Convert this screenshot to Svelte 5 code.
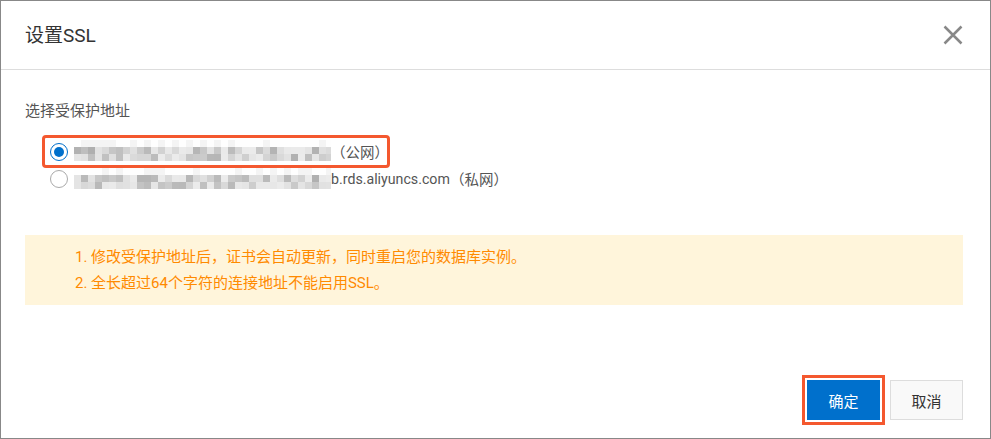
<script>
  // mosaic that stands in for the masked host names
  const shade = (row, col, seed) => {
    const n = Math.sin((col + 1) * 12.9898 + (row + 1) * 78.233 + seed) * 43758.5453;
    const f = n - Math.floor(n);
    // top row is only a faint haze, the two lower ones carry the darker blocks
    if (row === 0) return Math.round(f > 0.6 ? 244 : 254);
    return Math.round(235 - f * f * 60);
  };
  const cols = 37;
  const rows = [0, 1, 2];
  const mosaic = (seed) =>
    rows.map((r) =>
      Array.from({ length: cols }, (_, c) => {
        const v = shade(r, c, seed);
        return `rgb(${v},${v},${v})`;
      })
    );
  const publicCells = mosaic(3);
  const privateCells = mosaic(7);
</script>

<div class="dialog">
  <header class="head">
    <h2>设置SSL</h2>
    <button class="close" aria-label="关闭">
      <svg width="20" height="20" viewBox="0 0 20 20">
        <path d="M1.5 1.5 L18.5 18.5 M18.5 1.5 L1.5 18.5" stroke="#888" stroke-width="2.5" fill="none" />
      </svg>
    </button>
  </header>

  <div class="body">
    <div class="label">选择受保护地址</div>
    <div class="options">
      <div class="option marked">
        <span class="radio checked"></span>
        <span class="mask">
          {#each publicCells as row}
            {#each row as c}<i style="background:{c}"></i>{/each}
          {/each}
        </span>
        <span class="zone">（公网）</span>
      </div>
      <div class="option">
        <span class="radio"></span>
        <span class="mask">
          {#each privateCells as row}
            {#each row as c}<i style="background:{c}"></i>{/each}
          {/each}
        </span>
        <span class="host">b.rds.aliyuncs.com</span>
        <span class="zone">（私网）</span>
      </div>
    </div>

    <div class="notice">
      <div>1. 修改受保护地址后，证书会自动更新，同时重启您的数据库实例。</div>
      <div>2. 全长超过64个字符的连接地址不能启用SSL。</div>
    </div>
  </div>

  <footer class="foot">
    <button class="btn primary">确定</button>
    <button class="btn">取消</button>
  </footer>
</div>

<style>
  :global(body) {
    margin: 0;
    background: #fff;
  }
  .dialog {
    box-sizing: border-box;
    width: 991px;
    height: 439px;
    border: 1px solid #888;
    display: flex;
    flex-direction: column;
    font-family: "Roboto", "Noto Sans CJK SC", sans-serif;
    font-size: 15px;
    color: #555;
  }
  .head {
    height: 68px;
    flex: none;
    display: flex;
    align-items: center;
    justify-content: space-between;
    padding: 0 27px 0 24px;
    border-bottom: 1px solid #ddd;
  }
  h2 {
    margin: 0 0 3px;
    font-weight: 400;
    font-size: 19px;
    color: #333;
  }
  .close {
    border: 0;
    background: none;
    padding: 0;
    display: flex;
  }
  .body {
    flex: 1;
    padding: 31px 27px 0 24px;
  }
  .label {
    line-height: 20px;
  }
  .options {
    margin-top: 17px;
    display: flex;
    flex-direction: column;
    align-items: flex-start;
  }
  .option {
    display: flex;
    align-items: center;
    height: 27px;
    padding-left: 25px;
    white-space: nowrap;
  }
  .marked {
    outline: 3px solid #f4582f;
    margin-left: 20px;
    padding-left: 5px;
    border-radius: 1px;
  }
  .marked .mask {
    margin-bottom: 2px;
  }
  .marked .zone {
    margin-right: -2px;
  }
  .zone {
    font-size: 14.5px;
  }
  .radio {
    box-sizing: border-box;
    width: 18px;
    height: 18px;
    border: 1px solid #aaa;
    border-radius: 50%;
    margin-right: 6px;
    flex: none;
  }
  .checked {
    border-color: #0070cc;
    display: flex;
    align-items: center;
    justify-content: center;
  }
  .checked::after {
    content: "";
    width: 10px;
    height: 10px;
    border-radius: 50%;
    background: #0070cc;
  }
  .mask {
    display: grid;
    grid-template-columns: repeat(36, 7px) 5px;
    grid-auto-rows: 7px;
    width: 257px;
    flex: none;
  }
  .mask i {
    display: block;
  }
  .host {
    font-size: 14.2px;
  }
  .notice {
    margin-top: 43px;
    height: 70px;
    box-sizing: border-box;
    background: #fff5db;
    color: #ff8a00;
    padding: 9px 0 0 50px;
    line-height: 26px;
  }
  .foot {
    flex: none;
    display: flex;
    justify-content: flex-end;
    gap: 10px;
    padding: 0 27px 18px 0;
  }
  .btn {
    box-sizing: border-box;
    width: 73px;
    height: 40px;
    border: 1px solid #ddd;
    background: #f9f9f9;
    color: #333;
    font: inherit;
    padding: 0;
  }
  .primary {
    background: #0070cc;
    border-color: #0070cc;
    color: #fff;
    outline: 3px solid #f4582f;
    outline-offset: 2px;
  }
</style>
